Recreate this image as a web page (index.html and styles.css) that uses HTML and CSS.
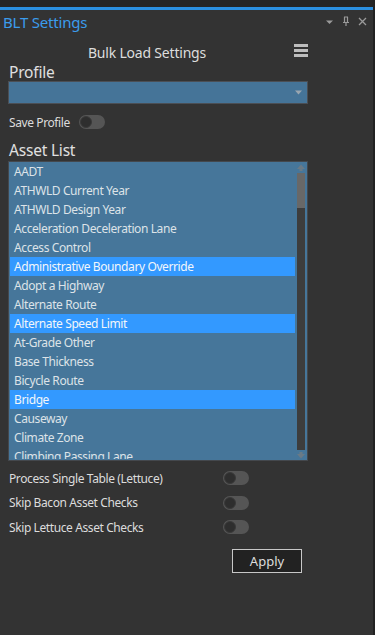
FILE: index.html
```html
<!DOCTYPE html>
<html>
<head>
<meta charset="utf-8">
<link rel="stylesheet" href="styles.css">
</head>
<body>
<div class="frame">
  <div class="topstrip"></div>
  <div class="accent"></div>
  <div class="titlebar">
    <span class="title">BLT Settings</span>
    <div class="winicons">
      <svg width="9" height="6" viewBox="0 0 9 6"><path d="M1 1.5h7L4.5 5z" fill="#9a9a9a"/></svg>
      <svg width="8" height="11" viewBox="0 0 8 11"><path d="M2 1h4M2.5 1v5M5.5 1v5M1 6.5h6M4 6.5V10" stroke="#9a9a9a" stroke-width="1.2" fill="none"/></svg>
      <svg width="9" height="9" viewBox="0 0 9 9"><path d="M1 1l7 7M8 1L1 8" stroke="#9a9a9a" stroke-width="1.3"/></svg>
    </div>
  </div>
  <div class="content">
    <div class="header">
      <span class="htitle">Bulk Load Settings</span>
      <svg class="menu" width="14" height="13" viewBox="0 0 14 13"><rect x="0" y="0" width="14" height="3" fill="#bdbdbd"/><rect x="0" y="5" width="14" height="3" fill="#bdbdbd"/><rect x="0" y="10" width="14" height="3" fill="#bdbdbd"/></svg>
    </div>
    <div class="section">Profile</div>
    <div class="combo">
      <svg width="7" height="5" viewBox="0 0 7 5"><path d="M0 0.5h7L3.5 4.5z" fill="#9aa6b0"/></svg>
    </div>
    <div class="saverow">
      <span>Save Profile</span>
      <span class="toggle"><span class="knob"></span></span>
    </div>
    <div class="section asset">Asset List</div>
    <div class="listbox">
      <div class="items">
        <div class="item">AADT</div>
        <div class="item">ATHWLD Current Year</div>
        <div class="item">ATHWLD Design Year</div>
        <div class="item">Acceleration Deceleration Lane</div>
        <div class="item">Access Control</div>
        <div class="item sel">Administrative Boundary Override</div>
        <div class="item">Adopt a Highway</div>
        <div class="item">Alternate Route</div>
        <div class="item sel">Alternate Speed Limit</div>
        <div class="item">At-Grade Other</div>
        <div class="item">Base Thickness</div>
        <div class="item">Bicycle Route</div>
        <div class="item sel">Bridge</div>
        <div class="item">Causeway</div>
        <div class="item">Climate Zone</div>
        <div class="item">Climbing Passing Lane</div>
      </div>
      <div class="scrollbar">
        <svg class="arrow" width="8" height="7" viewBox="0 0 8 7"><path d="M4 0.5L8 5H0z M2.5 5h3v2h-3z" fill="#6a7a86"/></svg>
        <div class="track"><div class="thumb"></div></div>
        <svg class="arrow" width="8" height="7" viewBox="0 0 8 7"><path d="M4 6.5L8 2H0z M2.5 2h3V0h-3z" fill="#6a7a86"/></svg>
      </div>
    </div>
    <div class="options">
      <div class="opt"><span>Process Single Table (Lettuce)</span><span class="toggle"><span class="knob"></span></span></div>
      <div class="opt"><span>Skip Bacon Asset Checks</span><span class="toggle"><span class="knob"></span></span></div>
      <div class="opt"><span>Skip Lettuce Asset Checks</span><span class="toggle"><span class="knob"></span></span></div>
    </div>
    <div class="actions">
      <button class="apply">Apply</button>
    </div>
  </div>
</div>
</body>
</html>
```

FILE: styles.css
```css
* { box-sizing: border-box; }
html, body { margin: 0; padding: 0; }
body {
  background: #333333;
  font-family: "Noto Sans", "Open Sans", sans-serif;
  color: #dcdcdc;
}
.frame {
  width: 375px;
  height: 635px;
  background: #333333;
  border-right: 2px solid #222222;
  overflow: hidden;
}
.topstrip { height: 7px; background: #252525; }
.accent { height: 3px; background: #2b8fe0; }
.titlebar {
  height: 23px;
  display: flex;
  align-items: center;
  justify-content: space-between;
  padding: 0 6px 0 3px;
}
.title {
  color: #3b9cec;
  font-size: 15px;
  line-height: 20px;
  letter-spacing: -0.2px;
}
.winicons {
  display: flex;
  align-items: center;
  gap: 8px;
}
.content { padding: 0 0 0 8px; width: 308px; }
.header {
  display: grid;
  grid-template-columns: 1fr 14px;
  align-items: center;
  height: 22px;
  margin-top: 6px;
}
.htitle {
  text-align: center;
  font-size: 14px;
  color: #dddddd;
  letter-spacing: -0.2px;
  padding-right: 8px;
  padding-top: 4px;
}
.menu { margin-right: -14px; }
.section {
  font-size: 15.5px;
  line-height: 20px;
  margin-top: 1px;
  color: #e0e0e0;
  padding-left: 1px;
  letter-spacing: -0.2px;
}
.combo {
  height: 23px;
  margin-top: -1px;
  background: #457498;
  border: 1px solid #4b4f55;
  display: flex;
  justify-content: flex-end;
  align-items: center;
  padding-right: 5px;
}
.saverow {
  display: flex;
  align-items: center;
  gap: 9px;
  height: 18px;
  margin-top: 9px;
  font-size: 12px;
  letter-spacing: -0.4px;
  padding-left: 1px;
}
.toggle {
  display: inline-flex;
  align-items: center;
  width: 26px;
  height: 14px;
  border-radius: 7px;
  background: #555555;
  padding: 1px;
}
.knob {
  width: 12px;
  height: 12px;
  border-radius: 50%;
  background: #2e2e2e;
  border: 1px solid #3a3a3a;
}
.asset { margin-top: 9px; }
.listbox {
  margin-top: 1px;
  height: 300px;
  background: #46769a;
  border: 1px solid #44484d;
  display: flex;
  padding: 0 2px 1px 1px;
  overflow: hidden;
}
.items { flex: 1; overflow: hidden; }
.item {
  height: 19px;
  line-height: 19px;
  font-size: 12px;
  letter-spacing: -0.4px;
  color: #dde3e8;
  padding-left: 4px;
  white-space: nowrap;
  margin-right: 2px;
}
.item.sel { background: #3399ff; color: #f2f6fa; }
.scrollbar {
  width: 8px;
  display: flex;
  flex-direction: column;
  align-items: center;
  gap: 2px;
  padding-top: 2px;
}
.arrow { flex: none; }
.track {
  flex: 1;
  width: 8px;
  background: #3d3d3d;
}
.thumb { height: 35px; background: #686868; }
.options {
  margin-top: 8px;
  display: flex;
  flex-direction: column;
  gap: 6.5px;
  padding-left: 1px;
}
.opt {
  display: grid;
  grid-template-columns: 214px 26px;
  align-items: center;
  height: 18px;
  font-size: 12px;
  letter-spacing: -0.4px;
}
.actions {
  display: flex;
  justify-content: flex-end;
  margin-top: 13px;
  padding-right: 6px;
}
.apply {
  width: 70px;
  height: 24px;
  background: #222222;
  border: 1px solid #c8c8c8;
  color: #dddddd;
  font-family: "Noto Sans", "Open Sans", sans-serif;
  font-size: 13px;
  padding: 0;
}
```
